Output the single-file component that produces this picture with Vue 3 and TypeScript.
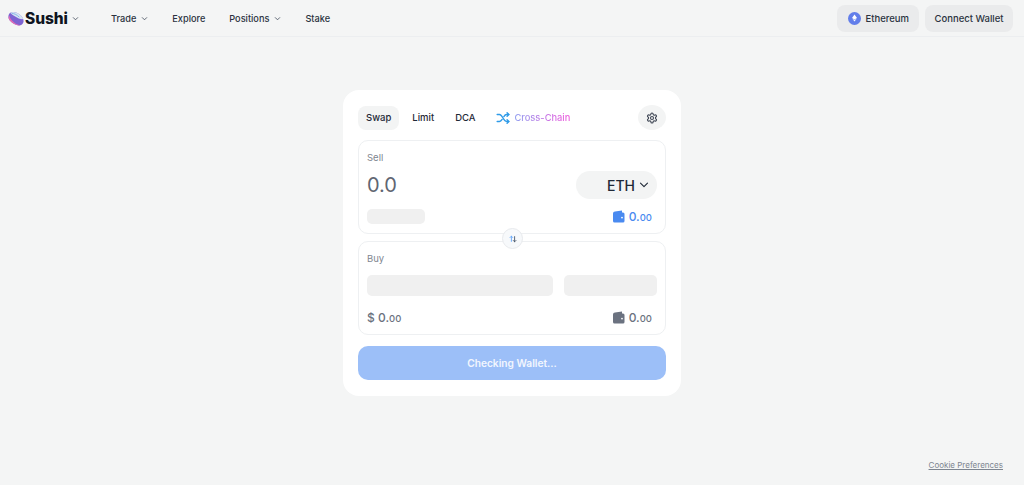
<template>
  <div class="page">
    <header class="topbar">
      <div class="nav-left">
        <div class="brand">
          <svg class="logo" width="16" height="16" viewBox="0 0 16 16">
            <path d="M2.200 1.800C4.300.2 8 .9 11.300 3.300c3.300 2.400 5 5.700 4 8.300-.9 2.600-3.700 3.400-6.600 2.500C5.500 13.100 1.800 10.600.7 7.600 0 5.500.6 3.100 2.200 1.800z" fill="#7d63d2" />
            <path d="M.7 7.600c1.100 3 4.800 5.500 8 6.500 1.300.4 2.600.5 3.700.2-3.500-.5-7.500-3.300-9.400-6.100C2 6.800 1.500 5.600 1.500 4.500.8 5.400.4 6.500.7 7.600z" fill="#e36ab5" />
            <path d="M2.200 1.800C4.300.2 8 .9 11.300 3.300c1.900 1.400 3.300 3.100 3.900 4.800-2.300.3-5.300-.6-8-2.500C4.700 3.900 2.900 2.800 2.200 1.800z" fill="#d5e3f2" />
            <path d="M4 2.300c2.300.2 5 1.500 7 3.600" fill="none" stroke="#7fb3e6" stroke-width=".9" stroke-linecap="round" />
          </svg>
          <span class="brand-name">Sushi</span>
          <svg class="chev" width="7" height="7" viewBox="0 0 8 8"><path d="M1.500 3l2.500 2.500L6.500 3" /></svg>
        </div>
        <nav class="links">
          <a v-for="item in navItems" :key="item.label" class="link">
            {{ item.label }}
            <svg v-if="item.menu" class="chev" width="7" height="7" viewBox="0 0 8 8"><path d="M1.500 3l2.500 2.500L6.500 3" /></svg>
          </a>
        </nav>
      </div>
      <div class="nav-right">
        <button class="top-btn network">
          <span class="eth-dot">
            <svg width="5" height="8" viewBox="0 0 7 10"><path d="M3.500 0L7 5 3.500 7 0 5zM.6 6l2.900 1.700L6.400 6 3.500 10z" fill="#fff" /></svg>
          </span>
          Ethereum
        </button>
        <button class="top-btn">Connect Wallet</button>
      </div>
    </header>

    <main class="content">
      <section class="widget">
        <div class="tabs">
          <button v-for="tab in tabs" :key="tab" class="tab" :class="{ active: tab === 'Swap' }">{{ tab }}</button>
          <div class="cross">
            <svg width="14" height="14" viewBox="0 0 24 24" fill="none" stroke="#2f9be8" stroke-width="2.400" stroke-linecap="round" stroke-linejoin="round">
              <path d="M2 6h4c5 0 7 12 12 12h4" />
              <path d="M2 18h4c1.800 0 3.200-1.500 4.500-3.500M13.500 9.500C14.800 7.500 16.200 6 18 6h4" />
              <path d="M19 3l3 3-3 3M19 15l3 3-3 3" />
            </svg>
            <span class="cross-text">Cross-Chain</span>
          </div>
          <button class="gear">
            <svg width="12" height="12" viewBox="0 0 24 24" fill="none" stroke="#3f4654" stroke-width="2.200" stroke-linecap="round" stroke-linejoin="round">
              <path d="M12.220 2h-.44a2 2 0 0 0-2 2v.18a2 2 0 0 1-1 1.730l-.43.250a2 2 0 0 1-2 0l-.15-.08a2 2 0 0 0-2.730.730l-.22.380a2 2 0 0 0 .730 2.730l.15.100a2 2 0 0 1 1 1.720v.510a2 2 0 0 1-1 1.740l-.15.090a2 2 0 0 0-.730 2.730l.22.380a2 2 0 0 0 2.730.730l.15-.08a2 2 0 0 1 2 0l.43.250a2 2 0 0 1 1 1.730V20a2 2 0 0 0 2 2h.44a2 2 0 0 0 2-2v-.18a2 2 0 0 1 1-1.730l.43-.25a2 2 0 0 1 2 0l.15.080a2 2 0 0 0 2.730-.730l.22-.390a2 2 0 0 0-.730-2.730l-.15-.08a2 2 0 0 1-1-1.740v-.5a2 2 0 0 1 1-1.740l.15-.09a2 2 0 0 0 .730-2.730l-.22-.38a2 2 0 0 0-2.730-.730l-.15.080a2 2 0 0 1-2 0l-.43-.25a2 2 0 0 1-1-1.730V4a2 2 0 0 0-2-2z" />
              <circle cx="12" cy="12" r="3" />
            </svg>
          </button>
        </div>

        <div class="panel sell">
          <div class="panel-label">Sell</div>
          <div class="amount-row">
            <span class="amount">0.0</span>
            <button class="token">ETH
              <svg width="10" height="10" viewBox="0 0 10 10" fill="none" stroke="#1f2937" stroke-width="1.100" stroke-linecap="round" stroke-linejoin="round"><path d="M1.500 3.200L5 6.700l3.500-3.500" /></svg>
            </button>
          </div>
          <div class="foot-row">
            <span class="skeleton small"></span>
            <span class="balance blue">
              <svg width="13" height="13" viewBox="0 0 13 13"><path d="M1 3.500A2 2 0 0 1 3 1.500L10 .6v2h1a1.500 1.500 0 0 1 1.500 1.500v7A1.500 1.500 0 0 1 11 12.600H2.500A1.500 1.500 0 0 1 1 11.100z" fill="currentColor" /><circle cx="10" cy="7.600" r=".9" fill="#fff" /></svg>
              <span>0.<small>00</small></span>
            </span>
          </div>
        </div>

        <div class="swap-toggle">
          <svg width="8" height="8" viewBox="0 0 10 10" fill="none" stroke-width="1.100" stroke-linecap="round" stroke-linejoin="round">
            <path d="M3 8V1.500M1.300 3.200L3 1.500l1.700 1.700" stroke="#60a5fa" />
            <path d="M7 2v6.500M5.300 6.800L7 8.500l1.700-1.700" stroke="#475569" />
          </svg>
        </div>

        <div class="panel buy">
          <div class="panel-label">Buy</div>
          <div class="skeleton-row">
            <span class="skeleton wide"></span>
            <span class="skeleton side"></span>
          </div>
          <div class="foot-row">
            <span class="balance">$ 0.<small>00</small></span>
            <span class="balance">
              <svg width="13" height="13" viewBox="0 0 13 13"><path d="M1 3.500A2 2 0 0 1 3 1.500L10 .6v2h1a1.500 1.500 0 0 1 1.500 1.500v7A1.500 1.500 0 0 1 11 12.600H2.500A1.500 1.500 0 0 1 1 11.100z" fill="currentColor" /><circle cx="10" cy="7.600" r=".9" fill="#fff" /></svg>
              <span>0.<small>00</small></span>
            </span>
          </div>
        </div>

        <button class="checking">Checking Wallet...</button>
      </section>
    </main>

    <a class="cookie">Cookie Preferences</a>
  </div>
</template>

<script setup lang="ts">
interface NavItem {
  label: string
  menu: boolean
}

const navItems: NavItem[] = [
  { label: 'Trade', menu: true },
  { label: 'Explore', menu: false },
  { label: 'Positions', menu: true },
  { label: 'Stake', menu: false }
]

const tabs = ['Swap', 'Limit', 'DCA']
</script>

<style>
html, body {
  margin: 0;
  background: #f4f5f5;
}
</style>

<style scoped>
.page {
  position: relative;
  height: 485px;
  overflow: hidden;
  background: #f4f5f5;
  font-family: Inter, "Liberation Sans", sans-serif;
  color: #1f2937;
}

.topbar {
  height: 36px;
  box-sizing: content-box;
  border-bottom: 1px solid #eceef0;
  display: flex;
  align-items: center;
  justify-content: space-between;
  padding: 0 11px 0 8px;
}

.nav-left {
  display: flex;
  align-items: center;
}

.brand {
  display: flex;
  align-items: center;
  width: 103px;
}

.logo {
  margin-right: 1px;
  margin-top: 1px;
}

.brand-name {
  font-size: 15.500px;
  font-weight: 800;
  color: #0f1420;
  letter-spacing: -0.1px;
}

.brand .chev {
  margin-left: 4px;
}

.chev path {
  fill: none;
  stroke: #4b5563;
  stroke-width: 1;
  stroke-linecap: round;
  stroke-linejoin: round;
}

.links {
  display: flex;
  align-items: center;
  gap: 24px;
}

.link {
  display: flex;
  align-items: center;
  gap: 5px;
  font-size: 9.200px;
  font-weight: 500;
  color: #2b3340;
}

.nav-right {
  display: flex;
  gap: 6px;
  align-items: center;
}

.top-btn {
  height: 27px;
  border: 0;
  border-radius: 8px;
  padding: 0 9.500px;
  background: #eaebec;
  font-family: inherit;
  font-size: 9.500px;
  font-weight: 500;
  color: #2b3340;
  display: flex;
  align-items: center;
}

.network {
  gap: 5px;
  padding: 0 10px 0 11px;
}

.eth-dot {
  width: 13px;
  height: 13px;
  border-radius: 50%;
  background: #627eea;
  display: flex;
  align-items: center;
  justify-content: center;
}

.content {
  display: flex;
  justify-content: center;
  padding-top: 53px;
}

.widget {
  width: 308px;
  background: #fff;
  border-radius: 16px;
  padding: 15px 15px 16px;
  display: flex;
  flex-direction: column;
}

.tabs {
  display: flex;
  align-items: center;
  height: 25px;
  gap: 5px;
  margin-bottom: 10px;
}

.tab {
  height: 24px;
  border: 0;
  border-radius: 8px;
  background: transparent;
  padding: 0 8px;
  font-family: inherit;
  font-size: 9.500px;
  font-weight: 500;
  color: #1f2937;
}

.tab.active {
  background: #f3f4f4;
}

.cross {
  display: flex;
  align-items: center;
  gap: 4px;
  margin-left: 8px;
}

.cross-text {
  font-size: 9.300px;
  font-weight: 500;
  background: linear-gradient(90deg, #8f9ff0, #ee58dc);
  -webkit-background-clip: text;
  background-clip: text;
  color: transparent;
}

.gear {
  margin-left: auto;
  width: 28px;
  height: 25px;
  border: 0;
  border-radius: 50%;
  background: #f3f4f4;
  display: flex;
  align-items: center;
  justify-content: center;
  padding: 0;
}

.panel {
  border: 1px solid #eef0f2;
  border-radius: 10px;
  box-sizing: border-box;
  padding: 0 8px;
}

.sell {
  height: 94px;
}

.buy {
  height: 94px;
  margin-top: 7px;
}

.panel-label {
  font-size: 9.500px;
  color: #808690;
  padding-top: 11px;
  line-height: 12px;
}

.amount-row {
  display: flex;
  justify-content: space-between;
  align-items: center;
  margin-top: 7px;
  height: 28px;
}

.amount {
  font-size: 20px;
  color: #5f6672;
}

.token {
  width: 81px;
  height: 28px;
  border: 0;
  border-radius: 14px;
  background: #f3f4f4;
  display: flex;
  align-items: center;
  justify-content: flex-end;
  gap: 4px;
  padding: 0 8px 0 0;
  font-family: inherit;
  font-size: 14px;
  font-weight: 500;
  color: #1f2937;
}

.foot-row {
  display: flex;
  justify-content: space-between;
  align-items: center;
  margin-top: 10px;
  height: 15px;
}

.buy .foot-row {
  margin-top: 14px;
}

.skeleton {
  display: block;
  background: #f0f0f0;
  border-radius: 5px;
}

.small {
  width: 58px;
  height: 15px;
}

.skeleton-row {
  display: flex;
  gap: 11px;
  margin-top: 10px;
}

.wide {
  width: 186px;
  height: 21px;
}

.side {
  width: 93px;
  height: 21px;
}

.balance {
  display: flex;
  align-items: center;
  gap: 4px;
  padding-right: 5px;
  font-size: 12px;
  font-weight: 500;
  color: #6b7280;
}

.balance.blue {
  color: #4a8af0;
}

.balance small {
  font-size: 9.500px;
}

.foot-row > .balance:first-child {
  padding-right: 0;
  display: block;
}

.swap-toggle {
  position: absolute;
  left: 502px;
  top: 228px;
  width: 19px;
  height: 19px;
  border-radius: 50%;
  background: #f7f9fb;
  border: 1px solid #e8eaed;
  display: flex;
  align-items: center;
  justify-content: center;
}

.checking {
  margin-top: 11px;
  height: 34px;
  border: 0;
  border-radius: 10px;
  background: #9cbff8;
  font-family: inherit;
  font-size: 10.200px;
  font-weight: 600;
  color: #f2f6fe;
}

.cookie {
  position: absolute;
  right: 21px;
  bottom: 14px;
  font-size: 8px;
  line-height: 11px;
  color: #7d8590;
  text-decoration: underline;
}
</style>
